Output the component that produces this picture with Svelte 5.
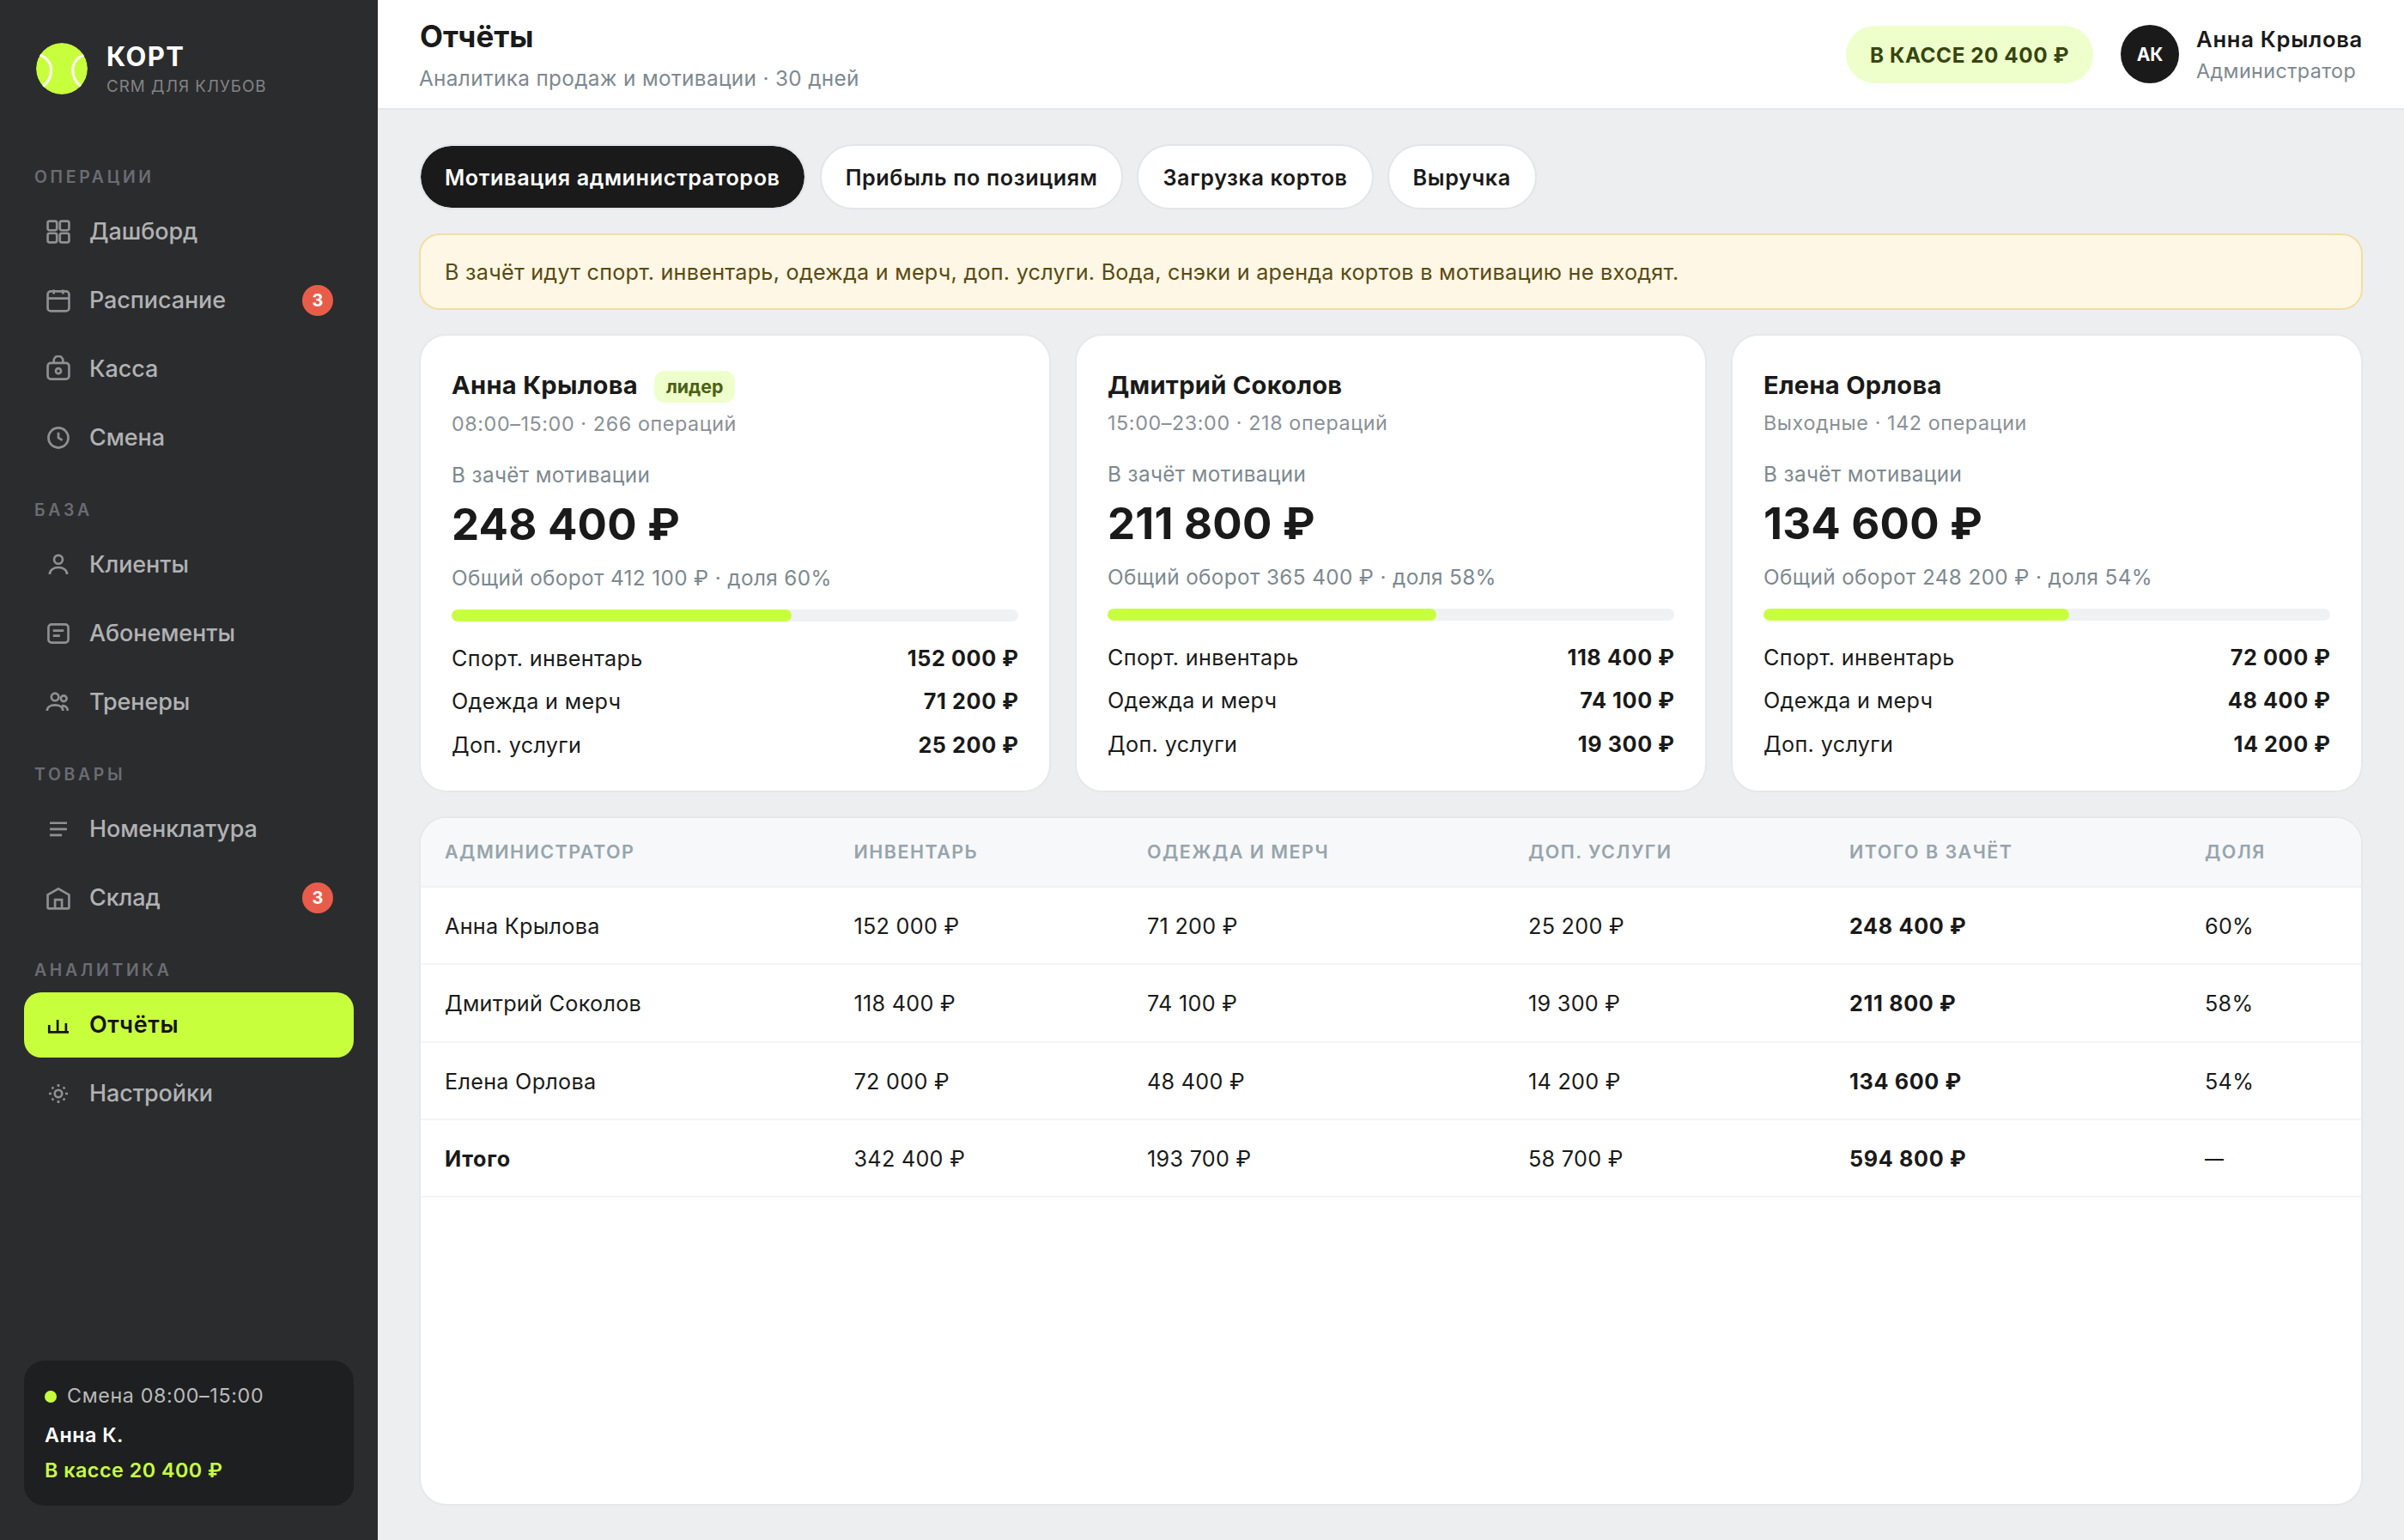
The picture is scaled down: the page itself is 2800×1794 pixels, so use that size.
<script>
  const sections = [
    {
      title: 'Операции',
      items: [
        { icon: 'grid', label: 'Дашборд' },
        { icon: 'calendar', label: 'Расписание', badge: 3 },
        { icon: 'cash', label: 'Касса' },
        { icon: 'clock', label: 'Смена' },
      ],
    },
    {
      title: 'База',
      items: [
        { icon: 'user', label: 'Клиенты' },
        { icon: 'card', label: 'Абонементы' },
        { icon: 'users', label: 'Тренеры' },
      ],
    },
    {
      title: 'Товары',
      items: [
        { icon: 'list', label: 'Номенклатура' },
        { icon: 'store', label: 'Склад', badge: 3 },
      ],
    },
    {
      title: 'Аналитика',
      items: [
        { icon: 'chart', label: 'Отчёты', active: true },
        { icon: 'gear', label: 'Настройки' },
      ],
    },
  ];

  const tabs = ['Мотивация администраторов', 'Прибыль по позициям', 'Загрузка кортов', 'Выручка'];

  const people = [
    {
      name: 'Анна Крылова', leader: true, sub: '08:00–15:00 · 266 операций',
      value: '248 400 ₽', turnover: '412 100 ₽', share: 60,
      rows: ['152 000 ₽', '71 200 ₽', '25 200 ₽'],
    },
    {
      name: 'Дмитрий Соколов', sub: '15:00–23:00 · 218 операций',
      value: '211 800 ₽', turnover: '365 400 ₽', share: 58,
      rows: ['118 400 ₽', '74 100 ₽', '19 300 ₽'],
    },
    {
      name: 'Елена Орлова', sub: 'Выходные · 142 операции',
      value: '134 600 ₽', turnover: '248 200 ₽', share: 54,
      rows: ['72 000 ₽', '48 400 ₽', '14 200 ₽'],
    },
  ];
  const kinds = ['Спорт. инвентарь', 'Одежда и мерч', 'Доп. услуги'];

  const columns = ['Администратор', 'Инвентарь', 'Одежда и мерч', 'Доп. услуги', 'Итого в зачёт', 'Доля'];
  const table = [
    ...people.map((p) => [p.name, ...p.rows, p.value, `${p.share}%`]),
    ['Итого', '342 400 ₽', '193 700 ₽', '58 700 ₽', '594 800 ₽', '—'],
  ];
</script>

{#snippet icon(name)}
  <svg class="icon" viewBox="0 0 18 18" aria-hidden="true">
    {#if name === 'grid'}
      <rect x="2" y="2" width="6" height="6" rx="1.2" />
      <rect x="10" y="2" width="6" height="6" rx="1.2" />
      <rect x="2" y="10" width="6" height="6" rx="1.2" />
      <rect x="10" y="10" width="6" height="6" rx="1.2" />
    {:else if name === 'calendar'}
      <rect x="2" y="3" width="14" height="13" rx="2" />
      <path d="M2 7.7h14M6 2v2.8M12 2v2.8" />
    {:else if name === 'cash'}
      <rect x="2" y="5" width="14" height="10.5" rx="2" />
      <path d="M6 5V3.5a3 3 0 0 1 6 0V5" />
      <circle cx="9" cy="10.2" r="1.7" />
    {:else if name === 'clock'}
      <circle cx="9" cy="9" r="6.5" />
      <path d="M9 5.5V9l2.6 1.6" />
    {:else if name === 'user'}
      <circle cx="9" cy="5.5" r="2.8" />
      <path d="M3.3 15.2c0-2.7 2.4-4.5 5.7-4.5s5.7 1.8 5.7 4.5" />
    {:else if name === 'card'}
      <rect x="2.5" y="3" width="13" height="12" rx="2" />
      <path d="M5.5 7.1h7M5.5 10.5h4.5" />
    {:else if name === 'users'}
      <circle cx="6.8" cy="5.6" r="2.4" />
      <circle cx="12.5" cy="6.6" r="1.9" />
      <path d="M1.6 14.6c0-2.3 2.2-3.7 5.2-3.7s5.2 1.4 5.2 3.7M11.3 11.3c2.2-.2 3.8 1.1 3.8 3.3" />
    {:else if name === 'list'}
      <path d="M3.4 4.9h11.2M3.4 8.9h11.2M3.4 12.9h7.9" />
    {:else if name === 'store'}
      <path d="M2 7l7-4 7 4v8.2a.8.8 0 0 1-.8.8H2.8a.8.8 0 0 1-.8-.8z" />
      <path d="M6.8 16v-5.8h4.5V16" />
    {:else if name === 'chart'}
      <path d="M2.25 13.7h13.5M2.95 13.7V9M8.5 13.7V5.6M14 13.7V7.9" />
    {:else if name === 'gear'}
      <circle cx="9" cy="9" r="2.4" />
      <path d="M9 2.8v1.7M9 13.5v1.7M2.8 9h1.7M13.5 9h1.7M4.8 4.8l1 1M12.2 12.2l1 1M4.8 13.2l1-1M12.2 5.8l1-1" />
    {/if}
  </svg>
{/snippet}

<div class="app">
  <aside>
    <div class="brand">
      <svg class="ball" viewBox="0 0 64 64" aria-hidden="true">
        <defs><clipPath id="ball"><circle cx="32" cy="32" r="30" /></clipPath></defs>
        <g clip-path="url(#ball)">
          <circle cx="32" cy="32" r="30" fill="#c8ff3d" />
          <path
            d="M3 15C14 17.5 19.6 25.5 19.6 33.5 19.6 42 15 49.5 8 54M61.3 15C50.3 17.5 44.7 25.5 44.7 33.5 44.7 42 49.3 49.5 56.3 54"
            fill="none" stroke="#fff" stroke-opacity="0.92" stroke-width="3.2"
          />
        </g>
      </svg>
      <div>
        <div class="brand-name">КОРТ</div>
        <div class="brand-sub">CRM ДЛЯ КЛУБОВ</div>
      </div>
    </div>

    <nav>
      {#each sections as section}
        <section>
          <h2>{section.title}</h2>
          <ul>
            {#each section.items as item}
              <li class:active={item.active}>
                {@render icon(item.icon)}
                <span class="nav-label">{item.label}</span>
                {#if item.badge}<span class="count">{item.badge}</span>{/if}
              </li>
            {/each}
          </ul>
        </section>
      {/each}
    </nav>

    <div class="shift">
      <div class="shift-time"><i></i>Смена 08:00–15:00</div>
      <div class="shift-name">Анна К.</div>
      <div class="shift-cash">В кассе 20 400 ₽</div>
    </div>
  </aside>

  <div class="page">
    <header>
      <div class="heading">
        <h1>Отчёты</h1>
        <p>Аналитика продаж и мотивации · 30 дней</p>
      </div>
      <div class="cash-pill">В КАССЕ 20 400 ₽</div>
      <div class="avatar">АК</div>
      <div class="me">
        <div class="me-name">Анна Крылова</div>
        <div class="me-role">Администратор</div>
      </div>
    </header>

    <main>
      <div class="tabs">
        {#each tabs as tab, i}
          <button class:selected={i === 0}>{tab}</button>
        {/each}
      </div>

      <div class="notice">
        В зачёт идут спорт. инвентарь, одежда и мерч, доп. услуги. Вода, снэки и аренда кортов в мотивацию не входят.
      </div>

      <div class="cards">
        {#each people as p}
          <article>
            <div class="who">
              <h3>{p.name}</h3>
              {#if p.leader}<span class="leader">лидер</span>{/if}
            </div>
            <div class="sub">{p.sub}</div>
            <div class="caption">В зачёт мотивации</div>
            <div class="value">{p.value}</div>
            <div class="turnover">Общий оборот {p.turnover} · доля {p.share}%</div>
            <div class="bar"><div class="fill" style="width: {p.share}%"></div></div>
            <dl>
              {#each kinds as kind, i}
                <div class="line"><dt>{kind}</dt><dd>{p.rows[i]}</dd></div>
              {/each}
            </dl>
          </article>
        {/each}
      </div>

      <div class="table">
        <div class="tr th">
          {#each columns as c}<div>{c}</div>{/each}
        </div>
        {#each table as row, r}
          <div class="tr">
            {#each row as cell, i}
              <div class:strong={i === 4 || (i === 0 && r === table.length - 1)} class:none={cell === '—'}>{cell}</div>
            {/each}
          </div>
        {/each}
      </div>
    </main>
  </div>
</div>

<style>
  :global(body) {
    margin: 0;
  }
  h1, h2, h3, p, ul, dl, dd {
    margin: 0;
    padding: 0;
  }
  .app {
    display: flex;
    height: 1794px;
    width: 2800px;
    overflow: hidden;
    background: #edeef0;
    color: #1a1a1a;
    font-family: Inter, "Liberation Sans", sans-serif;
    white-space: nowrap;
  }
  .app :global(*) {
    box-sizing: border-box;
  }

  /* Sidebar */
  aside {
    display: flex;
    flex-direction: column;
    width: 440px;
    flex: none;
    padding: 46px 28px 40px;
    background: #2b2c2e;
  }
  .brand {
    display: flex;
    align-items: center;
    gap: 20px;
    height: 67px;
    padding-left: 12px;
  }
  .ball {
    width: 64px;
    height: 64px;
  }
  .brand-name {
    color: #fff;
    font-size: 31px;
    font-weight: 700;
    line-height: 38px;
    letter-spacing: 1.4px;
  }
  .brand-sub {
    margin-top: 4px;
    color: #828386;
    font-size: 18.8px;
    line-height: 24px;
    letter-spacing: 1px;
  }
  nav {
    display: flex;
    flex-direction: column;
    gap: 34px;
    margin-top: 81px;
    flex: 1;
  }
  h2 {
    margin-bottom: 14px;
    padding-left: 12px;
    color: #6b6c73;
    font-size: 19.4px;
    font-weight: 600;
    line-height: 24px;
    letter-spacing: 3.7px;
    text-transform: uppercase;
  }
  ul {
    display: flex;
    flex-direction: column;
    gap: 4px;
    list-style: none;
  }
  li {
    display: flex;
    align-items: center;
    gap: 20px;
    height: 76px;
    padding: 0 24px;
    border-radius: 20px;
    color: #b1b2b3;
    font-size: 27px;
    font-weight: 500;
  }
  .icon {
    width: 32px;
    height: 32px;
    flex: none;
    fill: none;
    stroke: #8f9092;
    stroke-width: 1.5;
  }
  .nav-label {
    flex: 1;
    padding-bottom: 1px;
    letter-spacing: -0.1px;
  }
  .active {
    background: #c8ff3d;
    color: #141414;
    font-weight: 600;
  }
  .active .nav-label {
    letter-spacing: 0.6px;
  }
  .active .icon {
    stroke: #141414;
  }
  .count {
    width: 36px;
    height: 36px;
    border-radius: 50%;
    background: #e85d4a;
    color: #fff;
    font-size: 20px;
    font-weight: 700;
    line-height: 36px;
    text-align: center;
  }
  .shift {
    height: 169px;
    padding: 24.5px 24px 0;
    border-radius: 24px;
    background: #1e1f21;
    font-size: 23.3px;
    font-weight: 600;
    line-height: 32px;
    letter-spacing: 0.5px;
  }
  .shift-time {
    display: flex;
    align-items: center;
    gap: 12px;
    color: #b9babb;
    font-weight: 400;
    letter-spacing: 0.63px;
  }
  .shift-time i {
    width: 14px;
    height: 14px;
    margin-top: 2px;
    border-radius: 50%;
    background: #c8ff3d;
  }
  .shift-name {
    margin-top: 14px;
    color: #fff;
  }
  .shift-cash {
    margin-top: 9px;
    color: #c8ff3d;
  }

  /* Top bar */
  .page {
    display: flex;
    flex-direction: column;
    flex: 1;
    min-width: 0;
  }
  header {
    display: flex;
    align-items: center;
    height: 128px;
    padding: 0 48px;
    border-bottom: 2px solid #e5e6e7;
    background: #fff;
  }
  .heading {
    flex: 1;
    padding-top: 4px;
  }
  h1 {
    padding-left: 1px;
    font-size: 35px;
    font-weight: 700;
    line-height: 39px;
  }
  .heading p {
    margin-top: 13px;
    color: #7d898f;
    font-size: 24.3px;
    line-height: 32px;
    letter-spacing: 0.36px;
  }
  .cash-pill {
    height: 67px;
    padding: 0 28px;
    border-radius: 34px;
    background: #eeffcc;
    color: #364610;
    font-size: 24.3px;
    font-weight: 700;
    line-height: 68px;
    letter-spacing: 0.55px;
  }
  .avatar {
    width: 68px;
    height: 68px;
    margin: 0 20px 0 32px;
    border-radius: 50%;
    background: #1a1a1a;
    color: #fff;
    font-size: 21px;
    font-weight: 700;
    line-height: 69px;
    text-align: center;
  }
  .me {
    padding-top: 2px;
    line-height: 37px;
  }
  .me-name {
    font-size: 25.6px;
    font-weight: 600;
    letter-spacing: 0.72px;
  }
  .me-role {
    color: #7d898f;
    font-size: 23.3px;
    letter-spacing: 0.4px;
  }

  /* Content */
  main {
    display: flex;
    flex-direction: column;
    gap: 28px;
    flex: 1;
    padding: 40px 48px;
  }
  .tabs {
    display: flex;
    gap: 16px;
  }
  button {
    height: 76px;
    padding: 1px 28px 0;
    border: 2px solid #e1e6e8;
    border-radius: 38px;
    background: #fff;
    color: #1a1a1a;
    font: 600 25.2px Inter, "Liberation Sans", sans-serif;
    letter-spacing: 0.6px;
  }
  .selected {
    background: #1a1a1a;
    background-clip: padding-box;
    color: #fff;
  }
  .notice {
    height: 89px;
    padding: 0 28px;
    border: 2px solid #f0dfa3;
    border-radius: 24px;
    background: #fff7e5;
    color: #5a4a10;
    font-size: 25.2px;
    line-height: 86px;
    letter-spacing: 0.25px;
  }
  .cards {
    display: grid;
    grid-template-columns: repeat(3, 1fr);
    gap: 28px;
    height: 534px;
  }
  article {
    padding: 39px 36px 0;
    border: 2px solid #e6e8ea;
    border-radius: 32px;
    background: #fff;
  }
  .who {
    display: flex;
    align-items: flex-start;
    gap: 19px;
    min-height: 38px;
  }
  h3 {
    font-size: 29.1px;
    font-weight: 700;
    line-height: 37px;
    letter-spacing: 0.28px;
  }
  .leader {
    height: 37px;
    margin-top: 2px;
    padding: 0 14px;
    border-radius: 12px;
    background: #eeffcc;
    color: #4c5f14;
    font-size: 21.3px;
    font-weight: 700;
    line-height: 37px;
  }
  .sub {
    margin-top: 10px;
    color: #8b9196;
    font-size: 23.3px;
    line-height: 30px;
    letter-spacing: 0.6px;
  }
  .caption,
  .turnover {
    color: #7d898f;
    font-size: 24.3px;
    line-height: 30px;
    letter-spacing: 0.38px;
  }
  .caption {
    margin-top: 29px;
  }
  .value {
    margin-top: 13px;
    font-size: 51px;
    font-weight: 700;
    line-height: 60px;
    letter-spacing: 0.2px;
  }
  .turnover {
    margin-top: 17px;
  }
  .bar {
    height: 14px;
    margin-top: 21.5px;
    overflow: hidden;
    border-radius: 7px;
    background: #f0f1f3;
  }
  .fill {
    height: 100%;
    border-radius: 7px;
    background: #c8ff3d;
  }
  dl {
    display: flex;
    flex-direction: column;
    gap: 18.7px;
    margin-top: 27px;
  }
  .line {
    display: flex;
    justify-content: space-between;
    font-size: 25.2px;
    line-height: 32px;
    letter-spacing: 0.35px;
  }
  dd {
    font-weight: 700;
    letter-spacing: 0.6px;
    margin-right: -0.6px;
  }

  /* Table */
  .table {
    flex: 1;
    overflow: hidden;
    border: 2px solid #e6e8ea;
    border-radius: 32px;
    background: #fff;
  }
  .tr {
    display: grid;
    grid-template-columns: 476.5px 341.5px 444px 374px 414px 210px;
    height: 90.33px;
    border-bottom: 2px solid #f4f5f6;
    font-size: 25.2px;
    line-height: 91px;
    letter-spacing: 0.28px;
  }
  .tr div {
    height: 88px;
    padding-left: 28px;
  }
  .th {
    height: 81px;
    border-bottom-color: #eff1f3;
    background: #f6f8fa;
    color: #98a4ab;
    font-size: 21.5px;
    font-weight: 600;
    line-height: 78px;
    letter-spacing: 1.46px;
    text-transform: uppercase;
  }
  .strong {
    font-weight: 700;
    letter-spacing: 0.65px;
  }
  .none {
    font-size: 22px;
    font-weight: 500;
  }
</style>
